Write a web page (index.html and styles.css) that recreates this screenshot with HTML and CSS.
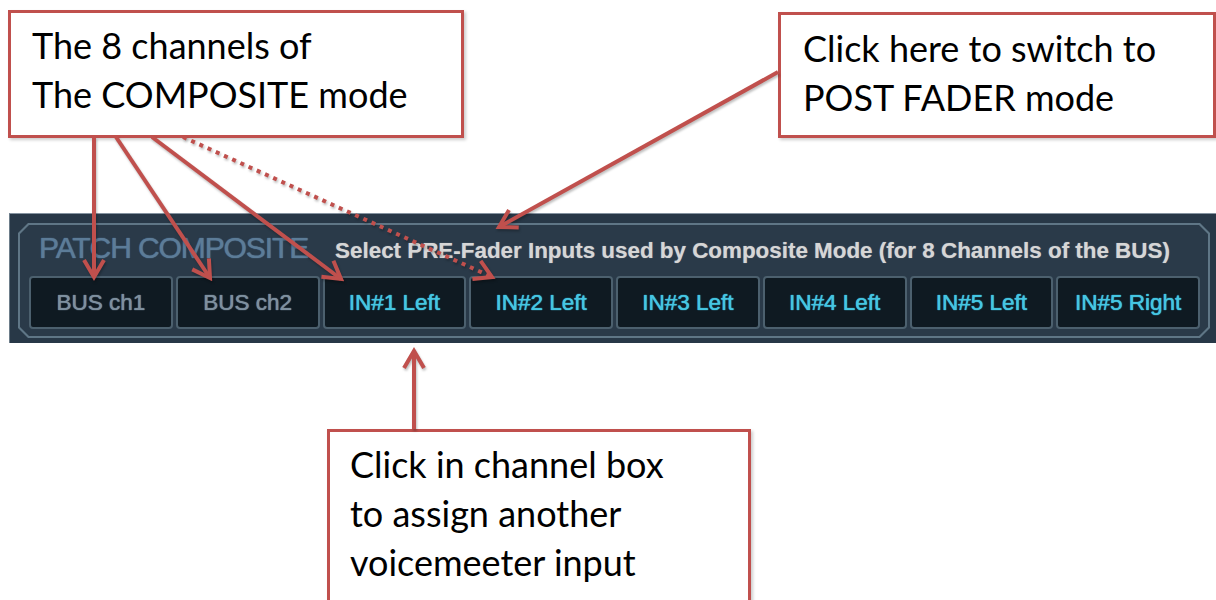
FILE: index.html
```html
<!DOCTYPE html>
<html lang="en">
<head>
    <meta charset="UTF-8">
    <title>Patch Composite - Help</title>
    <link rel="stylesheet" href="styles.css">
</head>
<body>
    <div class="stage">
        <div class="notes-top">
            <div class="note note-left">The 8 channels of<br>The COMPOSITE mode</div>
            <div class="note note-right">Click here to switch to<br>POST FADER mode</div>
        </div>

        <div class="panel">
            <div class="frame">
                <div class="frame-inner">
                    <div class="panel-head">
                        <span class="panel-title">PATCH COMPOSITE</span>
                        <span class="panel-sub">Select PRE-Fader Inputs used by Composite Mode (for 8 Channels of the BUS)</span>
                    </div>
                    <div class="channels">
                        <div class="chan bus">BUS ch1</div>
                        <div class="chan bus">BUS ch2</div>
                        <div class="chan">IN#1 Left</div>
                        <div class="chan">IN#2 Left</div>
                        <div class="chan">IN#3 Left</div>
                        <div class="chan">IN#4 Left</div>
                        <div class="chan">IN#5 Left</div>
                        <div class="chan">IN#5 Right</div>
                    </div>
                </div>
            </div>
        </div>

        <div class="note note-bottom">Click in channel box<br>to assign another<br>voicemeeter input</div>

        <!-- arrows drawn over the screenshot -->
        <svg class="arrows" width="1216" height="600" viewBox="0 0 1216 600">
            <defs>
                <marker id="head" viewBox="0 0 24 24" markerWidth="24" markerHeight="24" refX="20" refY="12" orient="auto" markerUnits="userSpaceOnUse">
                    <path d="M3,2 L20,12 L3,22" fill="none" stroke="#c0504d" stroke-width="4"/>
                </marker>
            </defs>
            <line x1="94" y1="137" x2="94" y2="277" class="arrow"/>
            <line x1="116" y1="137" x2="210" y2="278" class="arrow"/>
            <line x1="152" y1="137" x2="341" y2="279" class="arrow"/>
            <line x1="183" y1="137" x2="492" y2="277" class="arrow dotted"/>
            <line x1="778" y1="72" x2="499" y2="227" class="arrow"/>
            <line x1="414" y1="429" x2="414" y2="351" class="arrow"/>
        </svg>
    </div>
</body>
</html>
```

FILE: styles.css
```css
body {
    margin: 0;
    background: #ffffff;
    font-family: "Liberation Sans", Arial, sans-serif;
}
.stage {
    position: relative;
    width: 1216px;
    height: 600px;
    overflow: hidden;
}
.notes-top {
    display: flex;
    justify-content: space-between;
    align-items: flex-start;
    height: 213px;
}
.note {
    box-sizing: border-box;
    background: #ffffff;
    border: 3px solid #c0504d;
    box-shadow: 2px 2px 3px rgba(0, 0, 0, 0.2);
    font-family: Lato, "Open Sans", sans-serif;
    font-size: 36px;
    line-height: 49px;
    color: #000000;
}
.note-left {
    margin: 10px 0 0 8px;
    width: 456px;
    height: 128px;
    padding: 8px 0 0 21px;
}
.note-right {
    margin-top: 12px;
    width: 438px;
    height: 126px;
    padding: 9px 0 0 22px;
}
.note-bottom {
    margin: 86px 0 0 327px;
    width: 424px;
    height: 200px;
    padding: 8px 0 0 20px;
}
.panel {
    margin-left: 9px;
    height: 130px;
    box-sizing: border-box;
    padding: 9px 6px 0 8px;
    background: #283847;
    border-top: 1px solid #8593a0;
    border-left: 1px solid #6d7d8a;
}
.frame {
    height: 115px;
    padding: 2px;
    box-sizing: border-box;
    background: #5f7686;
    clip-path: polygon(10px 0, calc(100% - 10px) 0, 100% 10px, 100% calc(100% - 10px), calc(100% - 10px) 100%, 10px 100%, 0 calc(100% - 10px), 0 10px);
}
.frame-inner {
    height: 100%;
    box-sizing: border-box;
    background: #2a3a49;
    padding: 0 8px 0 9px;
    clip-path: polygon(9px 0, calc(100% - 9px) 0, 100% 9px, 100% calc(100% - 9px), calc(100% - 9px) 100%, 9px 100%, 0 calc(100% - 9px), 0 9px);
}
.panel-head {
    display: flex;
    align-items: baseline;
    height: 51px;
    padding-left: 10px;
    box-sizing: border-box;
    padding-top: 6px;
}
.panel-title {
    font-size: 30px;
    letter-spacing: -1.1px;
    color: #5c7c98;
    text-shadow: 0 0 1px #4f6f8c, 0 0 1px #4f6f8c;
    margin-right: 27px;
}
.panel-sub {
    font-size: 22.4px;
    font-weight: bold;
    color: #d6d6d6;
    text-shadow: 0 0 1px #8f9aa4;
}
.channels {
    display: grid;
    grid-template-columns: repeat(8, 1fr);
    gap: 3px;
}
.chan {
    height: 53px;
    box-sizing: border-box;
    border: 2px solid #4c606e;
    border-radius: 4px;
    background: #0f1a22;
    display: flex;
    align-items: center;
    justify-content: center;
    font-size: 22.5px;
    color: #45c6e2;
    text-shadow: 0 0 1px #45c6e2, 0 0 1px #2d8fa8;
}
.chan.bus {
    color: #7e909f;
    text-shadow: 0 0 1px #7e909f, 0 0 1px #56687a;
}
.arrows {
    position: absolute;
    left: 0;
    top: 0;
    pointer-events: none;
    filter: drop-shadow(1px 2px 1px rgba(0, 0, 0, 0.25));
}
.arrow {
    stroke: #c0504d;
    stroke-width: 4;
    marker-end: url(#head);
}
.arrow.dotted {
    stroke-dasharray: 4 5;
}
```
